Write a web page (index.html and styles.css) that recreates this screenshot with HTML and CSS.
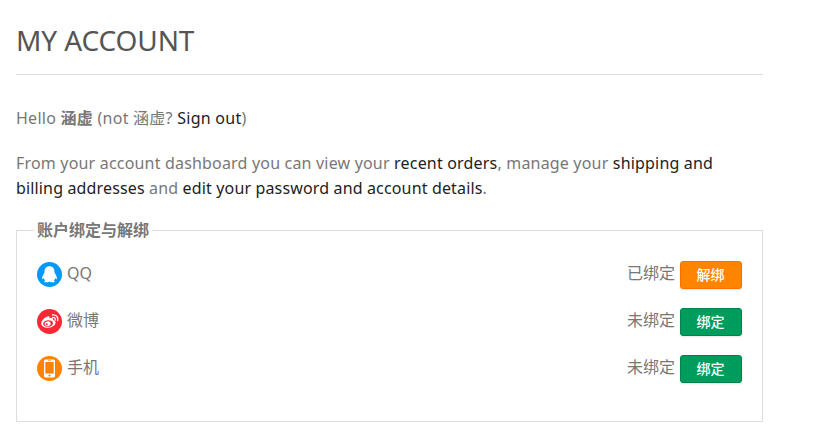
FILE: index.html
```
<!DOCTYPE html>
<html lang="zh-CN">
<head>
<meta charset="utf-8">
<title>My Account</title>
<link rel="stylesheet" href="styles.css">
</head>
<body>
<main class="account">
  <h1 class="title">MY ACCOUNT</h1>
  <p class="greeting">Hello <strong>涵虚</strong> (not 涵虚? <a>Sign out</a>)</p>
  <p class="intro"><span class="line">From your account dashboard you can view your <a>recent orders</a>, manage your <a>shipping and</a></span> <span class="line second"><a>billing addresses</a> and <a>edit your password and account details</a>.</span></p>
  <fieldset class="bindings">
    <legend>账户绑定与解绑</legend>
    <div class="row">
      <svg class="icon" viewBox="0 0 25 25"><circle cx="12.5" cy="12.5" r="12.5" fill="#0498fb"/><path fill="#fff" d="M12.5 4.200c-3.400 0-5.100 2.400-5 5.500 0 1-.5 1.500-.8 2.300-.9 1.600-1.900 3.300-1.600 4.800.3 1 1-.1 1.500-.8.3 1 .8 1.800 1.500 2.400-1.200.6-1.200 1.900.6 1.900 1.500 0 2.900-.1 3.800-.9.9.8 2.300.9 3.800.9 1.800 0 1.800-1.300.6-1.900.7-.6 1.200-1.400 1.500-2.400.5.700 1.200 1.800 1.500.8.300-1.500-.7-3.200-1.600-4.800-.3-.8-.8-1.300-.8-2.300.1-3.100-1.600-5.500-5-5.500z"/></svg>
      <span class="name">QQ</span>
      <span class="status">已绑定</span>
      <button class="btn unbind">解绑</button>
    </div>
    <div class="row">
      <svg class="icon" viewBox="0 0 25 25"><circle cx="12.500" cy="12.500" r="12.500" fill="#fb2836"/><path fill="#fff" d="M10.500 7.500c1.500-.6 2.500.1 2.100 1.900 1.800-.7 4-.6 3.500 1.700 2 .5 2.900 1.700 2.300 3.400-.9 2.600-4.200 4.300-7.500 4.300-3.700 0-6.600-1.800-6.600-4.600 0-2.500 3.400-5.800 6.200-6.700z"/><ellipse cx="11.100" cy="14.500" rx="5" ry="3.300" fill="#fb2836" transform="rotate(-7 11.100 14.500)"/><ellipse cx="10.700" cy="14.700" rx="3" ry="2.400" fill="#fff" transform="rotate(-15 10.700 14.700)"/><circle cx="9.800" cy="15.200" r="1" fill="#fb2836"/><path fill="none" stroke="#fff" stroke-width="1.300" stroke-linecap="round" d="M15.500 5.900c3.600-.5 6.100 2.300 5.100 5.800M15.700 8.400c1.800-.2 2.900 1 2.500 2.700"/></svg>
      <span class="name">微博</span>
      <span class="status">未绑定</span>
      <button class="btn">绑定</button>
    </div>
    <div class="row">
      <svg class="icon" viewBox="0 0 25 25"><circle cx="12.500" cy="12.500" r="12.500" fill="#ff8200"/><rect x="7" y="3.500" width="11" height="18" rx="1.500" fill="#fff"/><path fill="#ff8200" d="M8.300 6h8.400v11.500H8.300zM11 4.500h3v.6h-3z"/><circle cx="12.500" cy="19.500" r="1.100" fill="#ff8200"/></svg>
      <span class="name">手机</span>
      <span class="status">未绑定</span>
      <button class="btn">绑定</button>
    </div>
  </fieldset>
</main>
</body>
</html>
```
FILE: styles.css
```
body {
  margin: 0;
  background: #fff;
  color: #777;
  font: 16px/25px "Noto Sans", "Noto Sans CJK SC", sans-serif;
}
.account { width: 747px; margin-left: 16px; }
.title {
  margin: 0;
  height: 74px;
  border-bottom: 1px solid #ddd;
  color: #555;
  font-size: 28px;
  font-weight: 400;
  line-height: 81px;
  letter-spacing: -0.1px;
}
.greeting { margin: 31px 0 20px; letter-spacing: 0.26px; }
.intro { margin: 0 0 17px; }
.line { display: block; white-space: nowrap; letter-spacing: 0.185px; }
.second { letter-spacing: 0.15px; }
a { color: #222; }
.bindings {
  box-sizing: border-box;
  height: 204px;
  margin: 0;
  padding: 5px 20px 0;
  border: 1px solid #ddd;
}
legend {
  margin-left: -3px;
  padding: 0 3px;
  font-weight: 700;
}
.row {
  display: flex;
  align-items: center;
  height: 28px;
  margin: 13px 0 19px;
}
.row + .row { margin-top: 0; }
.icon { width: 25px; height: 25px; margin: 0 5px 2px 0; }
.name, .status { position: relative; top: -2px; }
.status { margin-left: auto; margin-right: 5px; }
.btn {
  width: 62px;
  height: 28px;
  padding: 0 1px 2px 0;
  border: 1px solid #00834b;
  border-radius: 3px;
  background: #009c5d;
  color: #fff;
  font: 500 14px/24px "Noto Sans CJK SC", sans-serif;
  box-shadow: 0 1px 2px rgba(0, 0, 0, 0.1);
}
.unbind { border-color: #ff6f00; background: #ff8500; }
```
